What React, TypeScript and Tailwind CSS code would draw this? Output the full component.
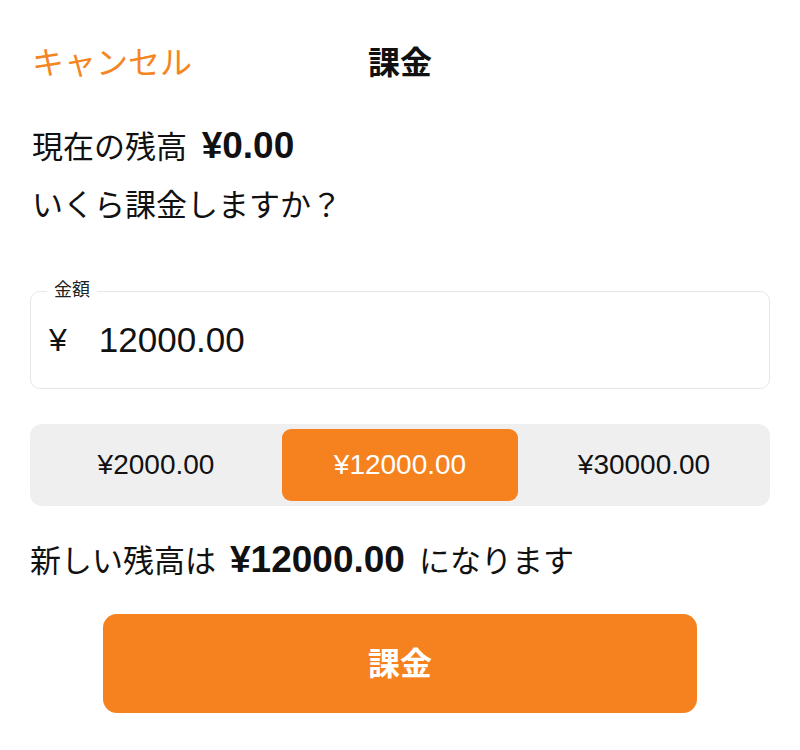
const font = { fontFamily: '"Liberation Sans", "Noto Sans CJK JP", sans-serif' }

const presets = ['¥2000.00', '¥12000.00', '¥30000.00']

export default function App() {
  const selected = 1
  return (
    <div
      className="w-[800px] h-[750px] bg-white text-[#111] overflow-hidden"
      style={font}
    >
      {/* Header */}
      <div className="relative flex items-center h-[64px] mt-[31px] px-[32px]">
        <button className="text-[32px] text-[#f5861f] leading-none">キャンセル</button>
        <div className="absolute left-0 right-0 text-center text-[32px] font-bold leading-none pointer-events-none">
          課金
        </div>
      </div>

      <div className="px-[32px] mt-[24px]">
        <p className="text-[31px] leading-[58px]">
          現在の残高 <span className="ml-[6px] font-bold text-[37px] leading-none">¥0.00</span>
        </p>
        <p className="text-[31px] leading-[58px]">いくら課金しますか？</p>
      </div>

      {/* Amount field */}
      <div className="px-[30px] mt-[56px]">
        <div className="relative h-[98px] border border-[#e6e6e6] rounded-[10px] flex items-center pl-[18px]">
          <span className="absolute -top-[14px] left-[16px] bg-white px-[7px] text-[18px] leading-[24px] text-[#222]">
            金額
          </span>
          <span className="text-[32px] mr-[32px]">¥</span>
          <span className="text-[35px]">12000.00</span>
        </div>
      </div>

      {/* Presets */}
      <div className="px-[30px] mt-[35px]">
        <div className="flex h-[82px] bg-[#efefef] rounded-[12px] py-[5px]">
          {presets.map((p, i) => (
            <div
              key={p}
              className={
                i === selected
                  ? 'w-[236px] flex items-center justify-center rounded-[9px] bg-[#f5821f] text-white text-[28px]'
                  : 'flex-1 flex items-center justify-center text-[28px] text-[#111]'
              }
            >
              {p}
            </div>
          ))}
        </div>
      </div>

      <p className="px-[30px] mt-[34px] text-[31px] leading-[44px]">
        新しい残高は
        <span className="mx-[14px] font-bold text-[37px] leading-none">¥12000.00</span>
        になります
      </p>

      <div className="flex justify-center mt-[30px]">
        <button className="w-[594px] h-[99px] rounded-[14px] bg-[#f5821f] text-white text-[32px] font-bold">
          課金
        </button>
      </div>
    </div>
  )
}
